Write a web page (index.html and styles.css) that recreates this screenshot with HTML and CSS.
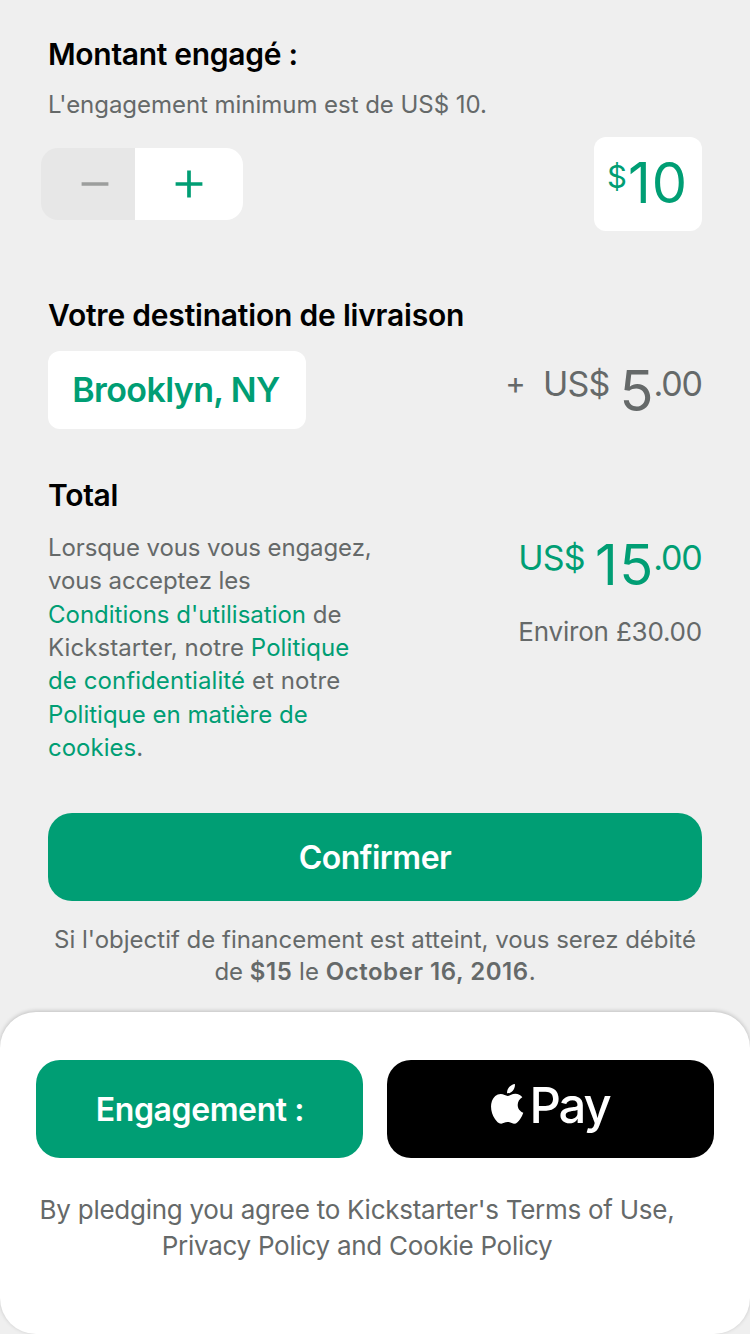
FILE: index.html
```html
<!DOCTYPE html>
<html lang="fr">
<head>
<meta charset="utf-8">
<title>Engagement</title>
<link rel="stylesheet" href="styles.css">
</head>
<body>
<main class="screen">
  <section class="pledge">
    <h2 class="heading">Montant engagé :</h2>
    <p class="minimum">L'engagement minimum est de US$ 10.</p>
    <div class="amount-row">
      <div class="stepper">
        <button class="step minus" aria-label="Diminuer"><svg width="28" height="28" viewBox="0 0 28 28"><path d="M.6 14H27.400" stroke="#9c9e9d" stroke-width="3.700"/></svg></button>
        <button class="step plus" aria-label="Augmenter"><svg width="28" height="28" viewBox="0 0 28 28"><path d="M.6 14H27.400M14 .6V27.400" stroke="#009e74" stroke-width="3.700"/></svg></button>
      </div>
      <div class="amount"><span class="currency">$</span><span class="digits">10</span></div>
    </div>
  </section>
  <section class="shipping">
    <h2 class="heading heading-wide">Votre destination de livraison</h2>
    <div class="shipping-row">
      <button class="place">Brooklyn, NY</button>
      <div class="price"><span class="small plus-sign">+</span><span class="small">US$</span><span class="big">5</span><span class="small">.00</span></div>
    </div>
  </section>
  <section class="total">
    <div class="total-left">
      <h2 class="heading">Total</h2>
      <p class="terms">Lorsque vous vous engagez,<br>vous acceptez les<br><span class="links"><a>Conditions d'utilisation</a> de<br><span class="loose">Kickstarter, notre <a>Politique<br>de confidentialité</a> et notre</span><br><a>Politique en matière de<br>cookies</a>.</span></p>
    </div>
    <div class="total-right">
      <div class="price green"><span class="small">US$</span><span class="big">15</span><span class="small">.00</span></div>
      <p class="approx">Environ £30.00</p>
    </div>
  </section>
  <button class="confirm">Confirmer</button>
  <p class="notice">Si l'objectif de financement est atteint, vous serez débité<br>de <b>$15</b> le <b>October 16, 2016</b>.</p>
  <footer class="sheet">
    <div class="actions">
      <button class="action">Engagement :</button>
      <button class="action apple" aria-label="Apple Pay"><svg class="apple-logo" width="33" height="40" viewBox="0 0 33 40" fill="#fff"><path d="M23.900 0C24.200 2.500 23.300 4.900 21.800 6.700C20.300 8.500 18.300 9.500 16.100 9.300C15.800 7 16.800 4.700 18.200 3.100C19.700 1.400 22 .2 23.900 0Z"/><path d="M31.300 13.300C28.400 15.100 26.700 17.800 26.700 21C26.700 24.500 28.900 27.400 32.300 28.700C31.600 30.900 30.500 33 29.200 34.900C27.500 37.400 25.700 39.700 23 39.700C20.300 39.700 19.600 38.100 16.600 38.100C13.600 38.100 12.600 39.700 10.100 39.700C7.500 39.700 5.500 37.200 3.800 34.700C.5 29.900 -1 22.700 .8 17.500C2.300 13.100 5.700 10 9.700 10C12.600 10 14.800 11.900 16.700 11.900C18.500 11.900 20.900 9.800 24.400 9.800C27.100 9.800 29.700 11.100 31.300 13.300Z"/></svg><span class="pay">Pay</span></button>
    </div>
    <p class="agree">By pledging you agree to Kickstarter's Terms of Use,<br>Privacy Policy and Cookie Policy</p>
  </footer>
</main>
</body>
</html>
```
FILE: styles.css
```css
* { box-sizing: border-box; }
body { margin: 0; background: #efefef; }
h2, p { margin: 0; }
button { border: 0; padding: 0; font-family: inherit; }
.screen { width: 750px; height: 1334px; overflow: hidden; display: flex; flex-direction: column; font-family: Inter, sans-serif; color: #656969; }
.heading { margin: 0 48px; font-size: 30px; line-height: 36px; font-weight: 600; color: #000; letter-spacing: -0.3px; white-space: nowrap; }
.heading-wide { letter-spacing: -0.2px; }
.pledge { padding-top: 36px; height: 297px; }
.minimum { margin: 17px 48px 0; font-size: 24px; line-height: 32px; letter-spacing: -0.04px; white-space: nowrap; }
.amount-row { display: flex; justify-content: space-between; align-items: flex-start; padding: 0 48px 0 41px; margin-top: 16px; }
.stepper { display: flex; width: 202px; height: 72px; margin-top: 11px; border-radius: 17px; overflow: hidden; }
.step { display: flex; align-items: center; justify-content: center; background: #fff; }
.minus { width: 94px; padding-left: 14px; background: #e7e7e7; }
.plus { width: 108px; }
.amount { display: flex; align-items: flex-start; width: 108px; height: 94px; border-radius: 12px; background: #fff; color: #009e74; padding: 13px 0 0 13px; }
.currency { font-size: 31px; line-height: 54px; }
.digits { margin-left: 1px; font-size: 56px; line-height: 66px; letter-spacing: 1px; }
.shipping { height: 180px; }
.shipping-row { display: flex; justify-content: space-between; margin: 18px 48px 0; }
.place { width: 258px; height: 78px; padding: 0 2px 2px 0; border-radius: 12px; background: #fff; color: #009e74; font-size: 34px; font-weight: 600; letter-spacing: -0.6px; }
.price { display: flex; align-items: flex-start; white-space: nowrap; }
.small { font-size: 34px; line-height: 65px; letter-spacing: -0.8px; }
.small:last-child { margin-right: 0.200px; letter-spacing: -1.200px; }
.big { font-size: 56px; line-height: 80px; letter-spacing: 1.500px; }
.plus-sign { font-size: 31px; line-height: 64px; margin-right: 18px; }
.price .big { margin: 0 -1.500px 0 10px; }
.green { color: #009e74; }
.total { display: flex; justify-content: space-between; height: 336px; }
.terms { margin: 18px 0 0 48px; font-size: 24px; line-height: 33.350px; letter-spacing: -0.1px; white-space: nowrap; }
.links { letter-spacing: 0; }
.loose { letter-spacing: 0.080px; }
.terms a { color: #009e74; }
.total-right { padding: 48px 48px 0 0; }
.approx { text-align: right; font-size: 26px; line-height: 32px; margin-top: 11px; letter-spacing: -0.2px; }
.confirm { flex: none; height: 88px; margin: 0 48px; border-radius: 24px; background: #009e74; color: #fff; font-size: 32px; font-weight: 600; letter-spacing: -0.500px; }
.notice { margin-top: 23px; text-align: center; font-size: 24px; line-height: 32px; white-space: nowrap; }
.notice b { font-weight: 600; letter-spacing: 0.550px; }
.sheet { height: 322px; margin-top: auto; flex: none; padding: 48px 36px 0; background: #fff; border-radius: 36px; box-shadow: 0 -1px 4px #0003; }
.actions { display: flex; gap: 24px; }
.action { width: 327px; height: 98px; padding-left: 1px; border-radius: 24px; background: #009e74; color: #fff; font-size: 32px; font-weight: 600; letter-spacing: -0.400px; }
.apple { padding: 0 1px 1px 0; background: #000; display: flex; justify-content: center; align-items: center; }
.apple-logo { margin: -9px 6px 0 0; }
.pay { margin-top: -6px; font-size: 49px; font-weight: 500; letter-spacing: -2.200px; }
.agree { width: 642px; margin-top: 34px; text-align: center; font-size: 26px; line-height: 36px; letter-spacing: -0.270px; white-space: nowrap; }
```
